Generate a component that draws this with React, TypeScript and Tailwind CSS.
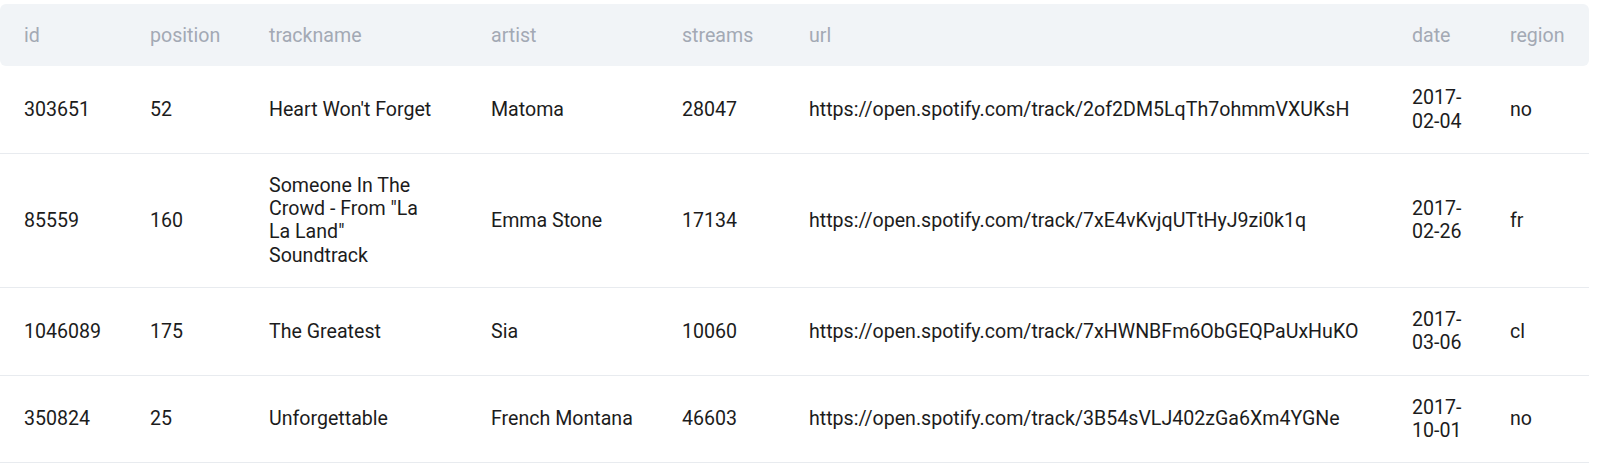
import React from "react";

type Row = {
  id: string;
  position: string;
  trackname: string;
  artist: string;
  streams: string;
  url: string;
  date: string;
  region: string;
};

const rows: Row[] = [
  {
    id: "303651",
    position: "52",
    trackname: "Heart Won't Forget",
    artist: "Matoma",
    streams: "28047",
    url: "https://open.spotify.com/track/2of2DM5LqTh7ohmmVXUKsH",
    date: "2017-02-04",
    region: "no",
  },
  {
    id: "85559",
    position: "160",
    trackname: 'Someone In The Crowd - From "La La Land" Soundtrack',
    artist: "Emma Stone",
    streams: "17134",
    url: "https://open.spotify.com/track/7xE4vKvjqUTtHyJ9zi0k1q",
    date: "2017-02-26",
    region: "fr",
  },
  {
    id: "1046089",
    position: "175",
    trackname: "The Greatest",
    artist: "Sia",
    streams: "10060",
    url: "https://open.spotify.com/track/7xHWNBFm6ObGEQPaUxHuKO",
    date: "2017-03-06",
    region: "cl",
  },
  {
    id: "350824",
    position: "25",
    trackname: "Unforgettable",
    artist: "French Montana",
    streams: "46603",
    url: "https://open.spotify.com/track/3B54sVLJ402zGa6Xm4YGNe",
    date: "2017-10-01",
    region: "no",
  },
];

const columns: (keyof Row)[] = [
  "id",
  "position",
  "trackname",
  "artist",
  "streams",
  "url",
  "date",
  "region",
];

const widths = ["w-[126px]", "w-[119px]", "w-[222px]", "w-[191px]", "w-[127px]", "w-[603px]", "w-[98px]", "w-[103px]"];

export default function App() {
  return (
    <div className="bg-white min-h-[467px] pt-[4px] font-['Roboto',sans-serif]">
      <table className="w-[1589px] table-fixed border-separate border-spacing-0 text-[19.6px] leading-[23.3px]">
        <colgroup>
          {widths.map((w, i) => (
            <col key={i} className={w} />
          ))}
        </colgroup>
        <thead>
          <tr>
            {columns.map((c) => (
              <th
                key={c}
                className="bg-[#f1f4f7] px-6 py-[19.5px] text-left font-normal text-[#a3a9b4] first:rounded-l-md last:rounded-r-md"
              >
                {c}
              </th>
            ))}
          </tr>
        </thead>
        <tbody>
          {rows.map((r) => (
            <tr key={r.id}>
              {columns.map((c) => (
                <td
                  key={c}
                  className={
                    "border-b border-[#e8ebef] py-5 pl-6 align-middle text-[#1c1c1c] break-words " +
                    (c === "trackname" ? "pr-[28px]" : "pr-6")
                  }
                >
                  {r[c]}
                </td>
              ))}
            </tr>
          ))}
        </tbody>
      </table>
    </div>
  );
}
